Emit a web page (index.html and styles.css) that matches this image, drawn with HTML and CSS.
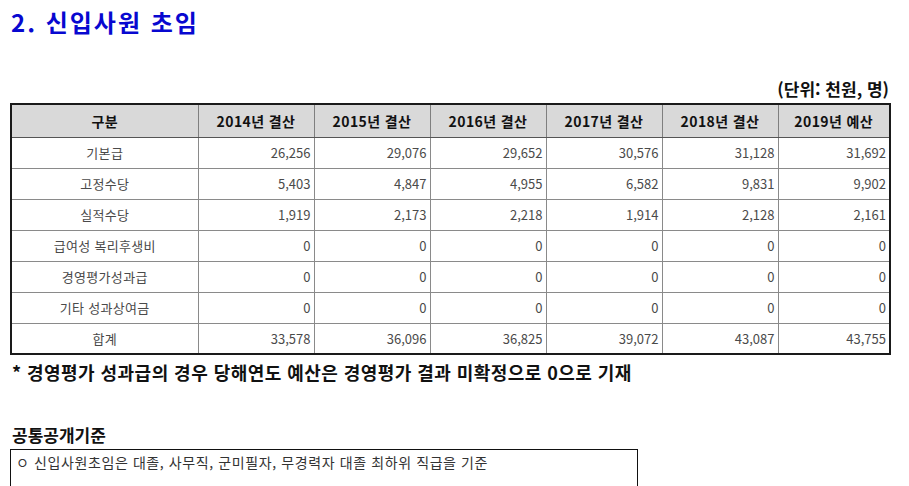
FILE: index.html
```html
<!DOCTYPE html>
<html lang="ko">
<head>
<meta charset="utf-8">
<link rel="stylesheet" href="styles.css">
</head>
<body>
<div class="page">
  <h1 class="title">2. 신입사원 초임</h1>
  <div class="unit">(단위: 천원, 명)</div>
  <table class="data">
    <colgroup>
      <col class="c-label"><col class="c-num"><col class="c-num"><col class="c-num"><col class="c-num"><col class="c-num"><col class="c-last">
    </colgroup>
    <thead>
      <tr><th>구분</th><th>2014년 결산</th><th>2015년 결산</th><th>2016년 결산</th><th>2017년 결산</th><th>2018년 결산</th><th>2019년 예산</th></tr>
    </thead>
    <tbody>
      <tr><td class="lbl">기본급</td><td>26,256</td><td>29,076</td><td>29,652</td><td>30,576</td><td>31,128</td><td>31,692</td></tr>
      <tr><td class="lbl">고정수당</td><td>5,403</td><td>4,847</td><td>4,955</td><td>6,582</td><td>9,831</td><td>9,902</td></tr>
      <tr><td class="lbl">실적수당</td><td>1,919</td><td>2,173</td><td>2,218</td><td>1,914</td><td>2,128</td><td>2,161</td></tr>
      <tr><td class="lbl">급여성 복리후생비</td><td>0</td><td>0</td><td>0</td><td>0</td><td>0</td><td>0</td></tr>
      <tr><td class="lbl">경영평가성과급</td><td>0</td><td>0</td><td>0</td><td>0</td><td>0</td><td>0</td></tr>
      <tr><td class="lbl">기타 성과상여금</td><td>0</td><td>0</td><td>0</td><td>0</td><td>0</td><td>0</td></tr>
      <tr><td class="lbl">합계</td><td>33,578</td><td>36,096</td><td>36,825</td><td>39,072</td><td>43,087</td><td>43,755</td></tr>
    </tbody>
  </table>
  <p class="note">* 경영평가 성과급의 경우 당해연도 예산은 경영평가 결과 미확정으로 0으로 기재</p>
  <h2 class="sub">공통공개기준</h2>
  <div class="box">ㅇ 신입사원초임은 대졸, 사무직, 군미필자, 무경력자 대졸 최하위 직급을 기준</div>
</div>
</body>
</html>
```

FILE: styles.css
```css
* { box-sizing: border-box; }
html, body { margin: 0; padding: 0; background: #fff; }
body {
  font-family: "Noto Sans CJK KR", "Noto Sans", sans-serif;
  color: #111;
}
.page {
  padding: 6px 19px 0 10px;
}
.title {
  margin: 0;
  font-size: 24px;
  line-height: 32px;
  font-weight: 700;
  letter-spacing: 2px;
  color: #0808d0;
  padding-left: 1px;
}
.unit {
  margin-top: 40px;
  text-align: right;
  font-size: 17px;
  line-height: 22px;
  font-weight: 700;
  color: #111;
  padding-right: 1px;
}
.data {
  margin-top: 3px;
  width: 879px;
  border-collapse: collapse;
  table-layout: fixed;
  border: 2px solid #1a1a1a;
  font-size: 13px;
}
.c-label { width: 187px; }
.c-num { width: 116px; }
.c-last { width: 112px; }
.data th {
  background: #d9d9d9;
  font-size: 14px;
  letter-spacing: 0.4px;
  font-weight: 700;
  color: #111;
  height: 33px;
  padding: 0;
  border: 1px solid #7f7f7f;
  border-bottom-color: #555;
  text-align: center;
}
.data td {
  height: 31px;
  padding: 0 3px 0 0;
  border: 1px solid #8a8a8a;
  text-align: right;
  color: #4a4a4a;
}
.data td.lbl {
  text-align: center;
  padding: 0;
  letter-spacing: 0.3px;
}
.note {
  margin: 5px 0 0 2px;
  font-size: 18px;
  line-height: 24px;
  letter-spacing: 0.45px;
  font-weight: 700;
  color: #111;
}
.sub {
  margin: 40px 0 0 2px;
  font-size: 17px;
  line-height: 22px;
  font-weight: 700;
  color: #111;
}
.box {
  margin-top: 3px;
  width: 628px;
  height: 60px;
  border: 1px solid #111;
  font-size: 14px;
  line-height: 24px;
  letter-spacing: 0.6px;
  padding: 0 5px;
  color: #333;
}
```
